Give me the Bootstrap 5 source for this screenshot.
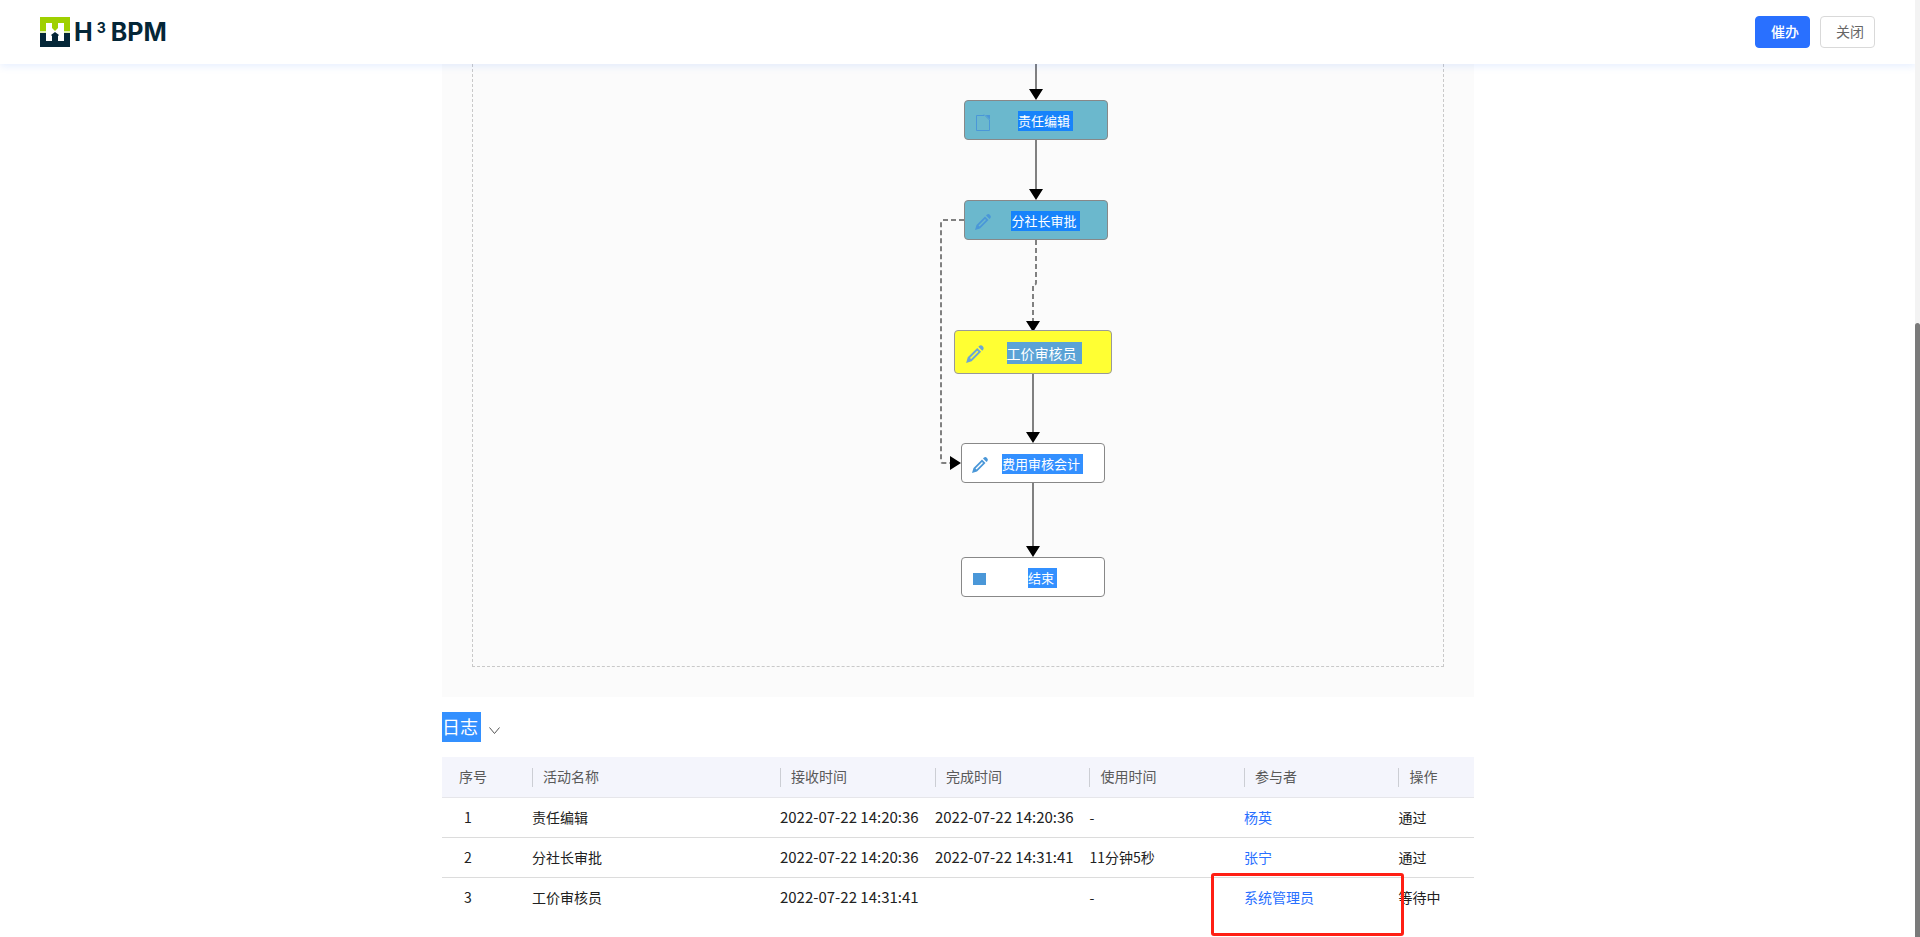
<!DOCTYPE html>
<html lang="zh-CN">
<head>
<meta charset="utf-8">
<meta name="viewport" content="width=device-width, initial-scale=1">
<title>H³ BPM</title>
<link rel="stylesheet" href="https://cdn.jsdelivr.net/npm/bootstrap@5.3.0/dist/css/bootstrap.min.css">
<style>
body{font-family:"Noto Sans CJK SC",sans-serif;font-size:14px;line-height:20px;color:#212121;padding-right:4px;background:#fff}
.topbar{height:64px;padding:0 41px 0 40px;z-index:2;box-shadow:0 2px 8px rgba(41,112,255,.12)}
.brand-word{font-family:Inter,sans-serif;font-weight:700;font-size:25px;line-height:30px;color:#042637}
.brand-word sup{font-size:14px;font-weight:700;top:-8px;line-height:0;margin:0 5px 0 4px}
.btn-act{--bs-btn-font-size:14px;--bs-btn-line-height:20px;--bs-btn-border-radius:4px;width:55px;height:32px;padding:0 10px 2px 15px;white-space:nowrap}
.btn-urge{--bs-btn-bg:#2970ff;--bs-btn-border-color:#2970ff;--bs-btn-color:#fff;--bs-btn-font-weight:500}
.btn-shut{--bs-btn-bg:#fff;--bs-btn-border-color:#d9d9d9;--bs-btn-color:#666}
.page-body{max-width:1032px;padding-bottom:19px}
.flow-panel{background:#fbfbfb;padding:0 30px 30px}
.flow-stage{height:603px;border:1px dashed #c9c9c9;border-top:0}
.flow-lines{left:0;top:0}
.flow-node{width:144px;height:40px;border:1px solid #888;border-radius:4px;background:#fff;font-size:13px;color:#fff;padding:2px 0 0 19px}
.flow-node span{background:#3390ff;line-height:20px;padding-right:3px}
.flow-node svg{position:absolute;left:9px;top:12px;fill:#4a97d8}
.flow-done{background:#6bb8cd}
.flow-done span{background:#1783fb}
.flow-now{width:158px;height:44px;background:#ff3;border-color:#999;font-size:14px;padding-left:22px}
.flow-now span{background:#5ba3d6;line-height:22px;padding-right:5px}
.flow-node.flow-now svg{left:10px;top:13px;fill:#6ba6d6}
.log-title{font-size:18px;line-height:28px;background:#3390ff;color:#fff;padding:0 3px 2px 0}
.log-table{table-layout:fixed;border-collapse:separate;border-spacing:0}
.log-table th{height:41px;padding:0;background:#f4f5fc;color:#595959;font-weight:400;border-bottom:1px solid #e6e6ea;vertical-align:middle}
.log-table th div{height:19px;border-left:1px solid #ccced4;padding-left:10px;line-height:17px}
.log-table th:first-child{padding:0 0 2px 17px}
.log-table td{height:40px;padding:0 0 2px;border-bottom:1px solid #dcdcdc;vertical-align:middle;white-space:nowrap;color:#212121}
.log-table td:first-child{padding-left:22px}
.log-table tr:last-child td{border-bottom-color:transparent}
.log-table .num{font-size:15px}
.log-table a{color:#2970ff;text-decoration:none}
.mark-frame{left:-33px;top:-5px;width:193px;height:63px;border:3px solid #ff1f14;border-radius:3px;pointer-events:none}
.side-track{width:5px;background:#f3f3f3;z-index:3}
.side-thumb{top:323px;background:#7a7a7a;border-radius:3px 3px 0 0}
</style>
</head>
<body>
<svg class="d-none" aria-hidden="true">
  <symbol id="pencil" viewBox="0 0 18 18"><path fill-rule="evenodd" d="M1 17l1.500-5L11 3.500 14.500 7 6 15.500zM4.500 12.500l1 1 6.500-6.500-1-1z"/><path d="M12 2.500l1-1q1.500-1 3 .5t.5 3l-1 1z"/></symbol>
  <symbol id="sheet" viewBox="0 0 16 18"><path fill="none" stroke="#4a97d8" d="M10 2.500H2.500v15h13V7L10 1.500"/><path d="M11.500 2H16v4.500z"/></symbol>
</svg>
<header class="topbar position-relative bg-white d-flex align-items-center justify-content-between">
  <a href="#" class="d-flex align-items-center text-decoration-none gap-1">
    <svg width="30" height="30" viewBox="0 0 30 30" aria-hidden="true"><path fill="#9fd000" d="M0 0h30v14H0z"/><path fill="#042637" d="M0 16h30v14H0z"/><path fill="#dff0b0" d="M0 14h30v2H0z"/><path fill="#fff" d="M6 6h6v18H6zM18 6h6v18h-6zM12 10h6v10h-6z"/><path fill="#9fd000" d="M12 6h6v5l-3 3-3-3z"/><path fill="#042637" d="M12 24v-5l-1-1 4-3 4 3-1 1v5z"/></svg>
    <span class="brand-word">H<sup>3</sup>BPM</span>
  </a>
  <div class="d-flex" style="gap:10px">
    <button type="button" class="btn btn-act btn-urge">催办</button>
    <button type="button" class="btn btn-act btn-shut">关闭</button>
  </div>
</header>

<main class="page-body mx-auto">
  <section class="flow-panel">
    <div class="flow-stage position-relative">
      <svg class="flow-lines position-absolute" width="970" height="602" viewBox="0 0 970 602" aria-hidden="true">
        <g fill="none" stroke="#808080" stroke-width="2">
          <path d="M563 0V30M563 76V130M560 310V370M560 419V484"/>
          <path stroke-dasharray="5 3" d="M563 176V219Q563 221 560 221V260M491 156H470Q468 156 468 158V397Q468 399 470 399H480"/>
        </g>
        <path d="M556 25h14l-7 11zM556 125h14l-7 11zM553 257h14l-7 11zM553 368h14l-7 11zM553 482h14l-7 11zM477 392v14l11-7z"/>
      </svg>
      <div class="flow-node flow-done position-absolute d-flex align-items-center justify-content-center" style="left:491px;top:36px">
        <svg width="16" height="18"><use href="#sheet"/></svg>
        <span>责任编辑</span>
      </div>
      <div class="flow-node flow-done position-absolute d-flex align-items-center justify-content-center" style="left:491px;top:136px">
        <svg width="18" height="18"><use href="#pencil"/></svg>
        <span>分社长审批</span>
      </div>
      <div class="flow-node flow-now position-absolute d-flex align-items-center justify-content-center" style="left:481px;top:266px">
        <svg width="20" height="20"><use href="#pencil"/></svg>
        <span>工价审核员</span>
      </div>
      <div class="flow-node position-absolute d-flex align-items-center justify-content-center" style="left:488px;top:379px">
        <svg width="18" height="18"><use href="#pencil"/></svg>
        <span>费用审核会计</span>
      </div>
      <div class="flow-node position-absolute d-flex align-items-center justify-content-center" style="left:488px;top:493px">
        <svg width="18" height="18" viewBox="0 0 18 18"><path d="M2 3h13v12H2z"/></svg>
        <span>结束</span>
      </div>
    </div>
  </section>

  <div class="d-flex align-items-center" style="margin:15px 0">
    <h2 class="log-title m-0 fw-normal">日志</h2>
    <svg class="ms-2 mt-2" width="11" height="8" viewBox="0 0 11 8" fill="none" stroke="#555" aria-hidden="true"><path d="M.5 .5l5 6 5-6"/></svg>
  </div>

  <table class="log-table w-100">
    <colgroup><col style="width:8.72%"><col style="width:24.03%"><col style="width:15.02%"><col style="width:14.97%"><col style="width:14.97%"><col style="width:14.97%"><col></colgroup>
    <thead>
      <tr><th scope="col">序号</th><th scope="col"><div>活动名称</div></th><th scope="col"><div>接收时间</div></th><th scope="col"><div>完成时间</div></th><th scope="col"><div>使用时间</div></th><th scope="col"><div>参与者</div></th><th scope="col"><div>操作</div></th></tr>
    </thead>
    <tbody>
      <tr><td>1</td><td>责任编辑</td><td class="num">2022-07-22 14:20:36</td><td class="num">2022-07-22 14:20:36</td><td>-</td><td><a href="#">杨英</a></td><td>通过</td></tr>
      <tr><td>2</td><td>分社长审批</td><td class="num">2022-07-22 14:20:36</td><td class="num">2022-07-22 14:31:41</td><td>11分钟5秒</td><td><a href="#">张宁</a></td><td>通过</td></tr>
      <tr><td>3</td><td>工价审核员</td><td class="num">2022-07-22 14:31:41</td><td></td><td>-</td><td class="position-relative"><a href="#">系统管理员</a><div class="mark-frame position-absolute"></div></td><td>等待中</td></tr>
    </tbody>
  </table>
</main>

<div class="side-track position-fixed top-0 bottom-0 end-0"><div class="side-thumb position-absolute start-0 end-0 bottom-0"></div></div>
<script src="https://cdn.jsdelivr.net/npm/bootstrap@5.3.0/dist/js/bootstrap.bundle.min.js"></script>
</body>
</html>
